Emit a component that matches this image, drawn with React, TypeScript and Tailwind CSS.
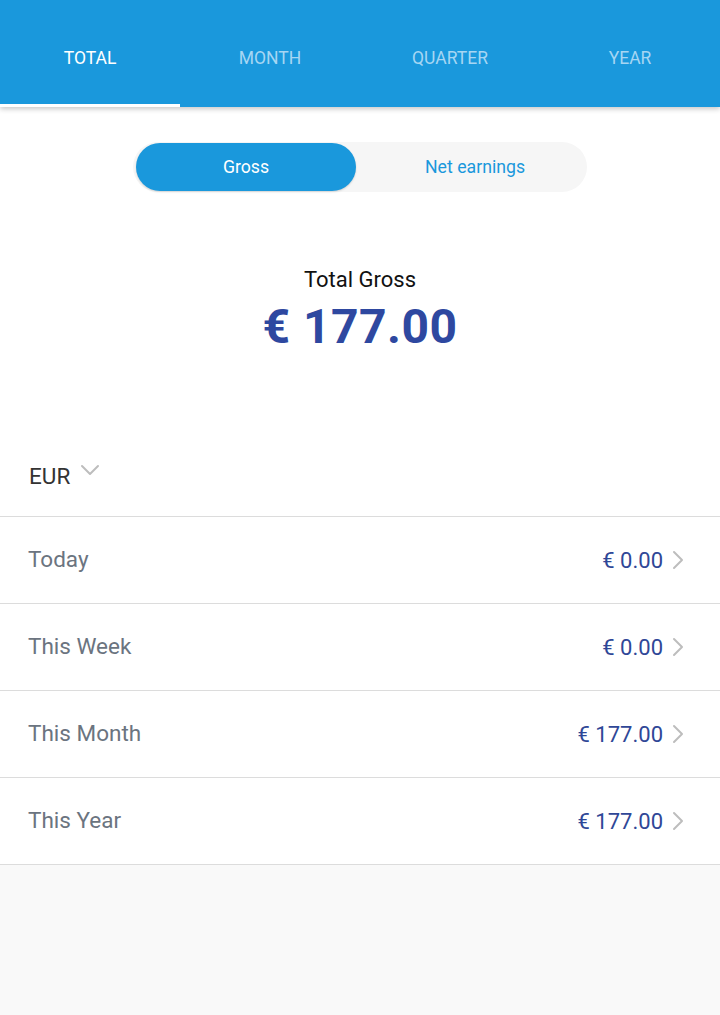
import React from "react";

const rows = [
  { label: "Today", value: "€ 0.00" },
  { label: "This Week", value: "€ 0.00" },
  { label: "This Month", value: "€ 177.00" },
  { label: "This Year", value: "€ 177.00" },
];

function Chevron() {
  return (
    <svg width="14" height="22" viewBox="0 0 14 22" fill="none">
      <path d="M3 3l8 8-8 8" stroke="#bdbdbd" strokeWidth="2" strokeLinecap="round" strokeLinejoin="round" />
    </svg>
  );
}

export default function App() {
  return (
    <div
      className="min-h-[1015px] flex flex-col bg-[#f9f9f9]"
      style={{ fontFamily: "Roboto, 'Noto Sans', sans-serif" }}
    >
      <div className="bg-white flex flex-col">
        <div className="relative z-10 h-[107px] bg-[#1a98dc] shadow-[0_2px_5px_rgba(0,0,0,0.22)] flex">
          {["TOTAL", "MONTH", "QUARTER", "YEAR"].map((t, i) => (
            <div key={t} className="relative flex-1 flex items-center justify-center pt-[10px]">
              <span className={`text-[17.5px] ${i === 0 ? "text-white" : "text-[#a6d6f3]"}`}>{t}</span>
              {i === 0 && <div className="absolute left-0 right-0 bottom-0 h-[3px] bg-white" />}
            </div>
          ))}
        </div>

        <div className="flex justify-center mt-[35px]">
          <div className="w-[454px] h-[50px] rounded-full bg-[#f6f6f6] flex items-center px-[3px]">
            <div className="w-[220px] h-[48px] rounded-full bg-[#1a98dc] shadow-[0_1px_2px_rgba(0,0,0,0.15)] flex items-center justify-center text-white text-[17.7px]">
              Gross
            </div>
            <div className="flex-1 flex items-center justify-center text-[#1a98dc] text-[17.7px] pl-[10px]">
              Net earnings
            </div>
          </div>
        </div>

        <div className="flex flex-col items-center mt-[75px]">
          <div className="text-[22px] leading-[26px] text-[#111]">Total Gross</div>
          <div className="text-[48px] leading-[56px] font-bold text-[#2e48a0] mt-[6px] tracking-[0.5px]">€ 177.00</div>
        </div>

        <div className="mt-[86px] h-[76px] flex items-center px-[29px] border-b border-[#dcdcdc]">
          <span className="text-[22.5px] text-[#333] -mt-[4px]">EUR</span>
          <svg width="22" height="14" viewBox="0 0 22 14" fill="none" className="ml-[9px] -mt-[18px]">
            <path d="M3 3l8 8 8-8" stroke="#bdbdbd" strokeWidth="2" strokeLinecap="round" strokeLinejoin="round" />
          </svg>
        </div>

        {rows.map((r) => (
          <div key={r.label} className="h-[87px] flex items-center justify-between pl-[28px] pr-[35px] border-b border-[#dcdcdc]">
            <span className="text-[22.5px] text-[#6b7480]">{r.label}</span>
            <div className="flex items-center gap-[8px]">
              <span className="text-[22px] text-[#2f4797]">{r.value}</span>
              <Chevron />
            </div>
          </div>
        ))}
      </div>
      <div className="flex-1 bg-[#f9f9f9]" />
    </div>
  );
}
